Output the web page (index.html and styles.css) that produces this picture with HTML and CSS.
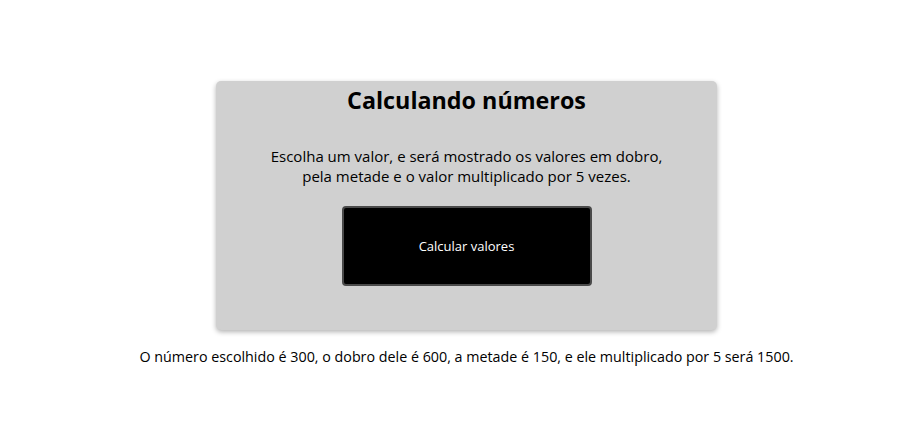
FILE: index.html
```html
<!DOCTYPE html>
<html lang="pt-BR">
<head>
<meta charset="utf-8">
<title>Calculando números</title>
<link rel="stylesheet" href="styles.css">
</head>
<body>
<main class="page">
  <section class="card">
    <h1 class="title">Calculando números</h1>
    <p class="lead">Escolha um valor, e será mostrado os valores em dobro,<br>pela metade e o valor multiplicado por 5 vezes.</p>
    <button class="btn" type="button">Calcular valores</button>
  </section>
  <p class="result">O número escolhido é 300, o dobro dele é 600, a metade é 150, e ele multiplicado por 5 será 1500.</p>
</main>
</body>
</html>
```
FILE: styles.css
```css
html, body {
  margin: 0;
  padding: 0;
  background: #ffffff;
}
body {
  font-family: "Open Sans", "Noto Sans", sans-serif;
  color: #000;
}
.page {
  display: flex;
  flex-direction: column;
  align-items: center;
  padding: 81px 0 0 9px;
}
.card {
  box-sizing: border-box;
  width: 501px;
  height: 249px;
  background: #d0d0d0;
  border-radius: 5px;
  box-shadow: 0 2px 5px rgba(0, 0, 0, 0.3);
  display: flex;
  flex-direction: column;
  align-items: center;
}
.title {
  margin: 3px 0 0;
  font-size: 23.3px;
  line-height: 32px;
  font-weight: 700;
}
.lead {
  margin: 30px 0 0;
  font-size: 15px;
  line-height: 20px;
  text-align: center;
}
.btn {
  margin-top: 20px;
  width: 250px;
  height: 80px;
  background: #000;
  color: #fff;
  border: 2px solid #4a4a4a;
  border-radius: 4px;
  font-family: inherit;
  font-size: 13px;
}
.result {
  margin: 17px 0 0;
  font-size: 14.3px;
  line-height: 20px;
}
```
